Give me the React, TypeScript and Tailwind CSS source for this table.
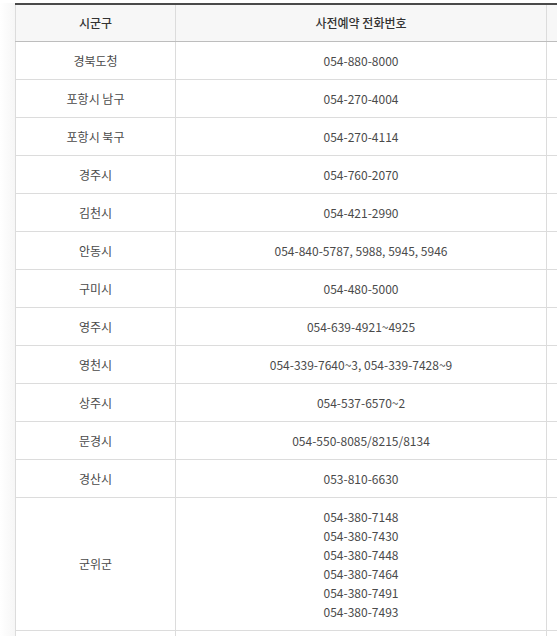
import React from "react";

const rows: { name: string; phones: string[] }[] = [
  { name: "경북도청", phones: ["054-880-8000"] },
  { name: "포항시 남구", phones: ["054-270-4004"] },
  { name: "포항시 북구", phones: ["054-270-4114"] },
  { name: "경주시", phones: ["054-760-2070"] },
  { name: "김천시", phones: ["054-421-2990"] },
  { name: "안동시", phones: ["054-840-5787, 5988, 5945, 5946"] },
  { name: "구미시", phones: ["054-480-5000"] },
  { name: "영주시", phones: ["054-639-4921~4925"] },
  { name: "영천시", phones: ["054-339-7640~3, 054-339-7428~9"] },
  { name: "상주시", phones: ["054-537-6570~2"] },
  { name: "문경시", phones: ["054-550-8085/8215/8134"] },
  { name: "경산시", phones: ["053-810-6630"] },
  {
    name: "군위군",
    phones: [
      "054-380-7148",
      "054-380-7430",
      "054-380-7448",
      "054-380-7464",
      "054-380-7491",
      "054-380-7493",
    ],
  },
];

export default function App() {
  return (
    <div
      className="w-[557px] h-[636px] overflow-hidden bg-white text-[12px] leading-[19px] text-[#4a4a4a]"
      style={{ fontFamily: '"Noto Sans CJK KR", "Noto Sans", sans-serif' }}
    >
      <div className="flex pt-[3px]">
        <div className="w-[15px] shrink-0 bg-gradient-to-r from-white to-[#f6f6f6]" />
        <div className="w-[620px] shrink-0">
          <table className="w-[620px] table-fixed border-collapse border-t-2 border-[#4a4a4a]">
            <colgroup>
              <col className="w-[160px]" />
              <col className="w-[371px]" />
              <col />
            </colgroup>
            <thead>
              <tr className="bg-[#f7f7f7]">
                <th className="h-[37px] border-l border-r border-b border-l-[#dcdcdc] border-r-[#dcdcdc] border-b-[#bdbdbd] font-medium text-[#333] text-center align-middle p-0">
                  시군구
                </th>
                <th className="h-[37px] border-r border-b border-r-[#dcdcdc] border-b-[#bdbdbd] font-medium text-[#333] text-center align-middle p-0">
                  사전예약 전화번호
                </th>
                <th className="h-[37px] border-b border-b-[#bdbdbd] p-0" />
              </tr>
            </thead>
            <tbody>
              {rows.map((r) => (
                <tr key={r.name}>
                  <td className="border-l border-r border-b border-[#dcdcdc] text-center align-middle py-[9px] px-0">
                    {r.name}
                  </td>
                  <td className="border-r border-b border-[#dcdcdc] text-center align-middle py-[9px] px-0">
                    {r.phones.map((p) => (
                      <div key={p}>{p}</div>
                    ))}
                  </td>
                  <td className="border-b border-[#dcdcdc] py-[9px]" />
                </tr>
              ))}
              <tr>
                <td className="h-[38px] border-l border-r border-b border-[#dcdcdc]" />
                <td className="h-[38px] border-r border-b border-[#dcdcdc]" />
                <td className="h-[38px] border-b border-[#dcdcdc]" />
              </tr>
            </tbody>
          </table>
        </div>
      </div>
    </div>
  );
}
